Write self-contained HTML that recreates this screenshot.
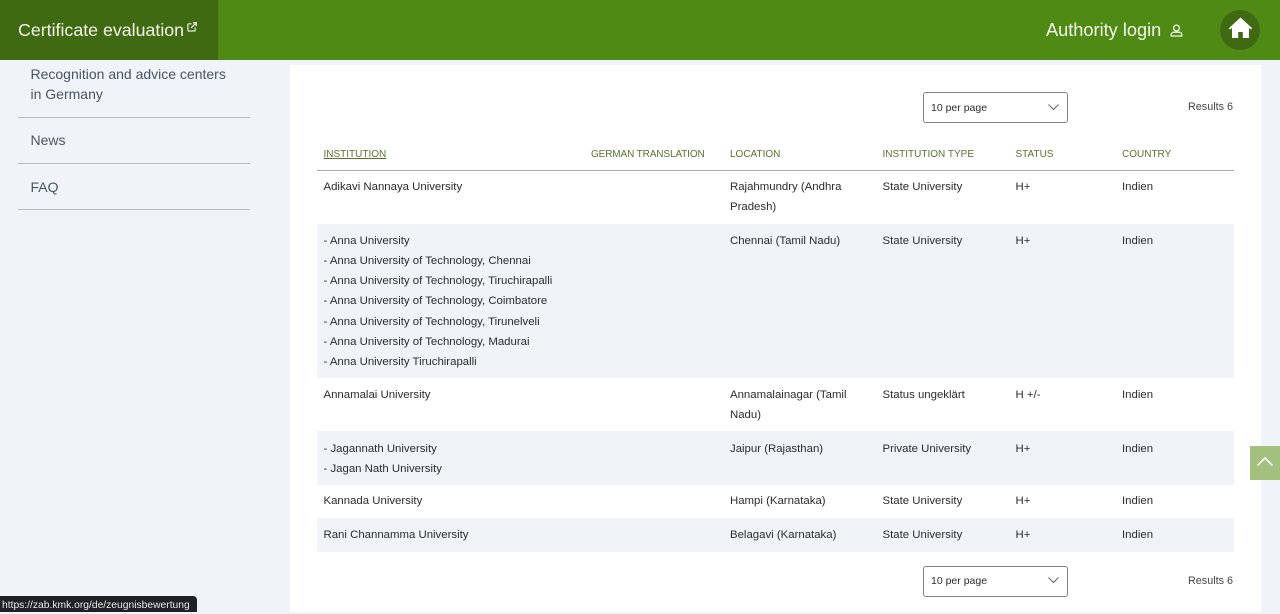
<!DOCTYPE html>
<html lang="en">
<head>
<meta charset="utf-8">
<title>Certificate evaluation</title>
<style>
html,body{margin:0;padding:0;width:1280px;height:612px;overflow:hidden;background:#f0f4f8;font-family:"Liberation Sans",sans-serif;}
div,span,a{position:absolute;white-space:nowrap;}
.t{font-size:11.4px;line-height:20px;color:#2b2b2b;margin-top:1px;}
.h{font-size:10px;line-height:14px;color:#55742a;top:148px;}
.n{font-size:14px;line-height:20px;color:#4a5560;left:30.5px;}
.r{background:#f0f4f8;left:317px;width:917px;}
.l{background:#b9bdc1;height:1px;left:18px;width:232px;}
.sel{left:923px;width:143px;height:29px;border:1px solid #7c8288;border-radius:3px;background:#fff;}
.res{font-size:10.8px;line-height:16px;color:#444;}
</style>
</head>
<body>
<div style="left:290px;top:65px;width:971px;height:547px;background:#fff"></div>

<div class="n" style="top:64px">Recognition and advice centers</div>
<div class="n" style="top:84px">in Germany</div>
<div class="l" style="top:117px"></div>
<div class="n" style="top:130px">News</div>
<div class="l" style="top:163px"></div>
<div class="n" style="top:177px">FAQ</div>
<div class="l" style="top:209px"></div>

<div style="left:0;top:0;width:1280px;height:60px;background:#4f8a15"></div>
<div style="left:0;top:0;width:218px;height:60px;background:#3f6a12"></div>
<div style="left:18px;top:19px;font-size:17.8px;line-height:22px;color:#f1f6ea">Certificate evaluation</div>
<svg style="position:absolute;left:187px;top:22px" width="10" height="10" viewBox="0 0 11 11" fill="none" stroke="#f1f6ea" stroke-width="1.3"><path d="M5 2H2a1 1 0 0 0-1 1v6a1 1 0 0 0 1 1h6a1 1 0 0 0 1-1V6"/><path d="M4.500 6.500 10 1M6.500 .8H10.200V4.500"/></svg>
<div style="left:1046px;top:19px;font-size:18.2px;line-height:22px;color:#f1f6ea">Authority login</div>
<svg style="position:absolute;left:1170px;top:24px" width="13" height="13" viewBox="0 0 13 13" fill="none" stroke="#f1f6ea" stroke-width="1.300"><circle cx="6.500" cy="4" r="2.900"/><path d="M1.200 12v-1.200c0-1.600 1.200-2.600 2.800-2.600h5c1.600 0 2.800 1 2.800 2.600V12z"/></svg>
<div style="left:1220px;top:10px;width:40px;height:40px;border-radius:50%;background:#3f6a12"></div>
<svg style="position:absolute;left:1228px;top:17px" width="25" height="22" viewBox="0 0 25 22"><path fill="#fff" d="M12.500 .5 0.800 11.200l1.300 1.300 1.900-1.600V21h6.200v-6h4.600v6H21V10.900l1.900 1.600 1.300-1.300z"/></svg>

<div class="sel" style="top:92px"></div>
<div style="left:931px;top:100px;font-size:10.5px;line-height:16px;color:#2b2b2b">10 per page</div>
<svg style="position:absolute;left:1047px;top:103px" width="13" height="8" viewBox="0 0 13 8" fill="none" stroke="#666" stroke-width="1"><path d="M1.500 1.500l5 5 5-5"/></svg>
<div class="res" style="left:1188px;top:99px">Results 6</div>

<div class="h" style="left:323.500px;text-decoration:underline">INSTITUTION</div>
<div class="h" style="left:591px;letter-spacing:-.12px">GERMAN TRANSLATION</div>
<div class="h" style="left:730px">LOCATION</div>
<div class="h" style="left:882.500px">INSTITUTION TYPE</div>
<div class="h" style="left:1015.500px">STATUS</div>
<div class="h" style="left:1122px">COUNTRY</div>
<div style="left:317px;top:170px;width:917px;height:1px;background:#a9abad"></div>

<div class="r" style="top:224px;height:154px"></div>
<div class="r" style="top:431px;height:54px"></div>
<div class="r" style="top:518px;height:34px"></div>

<div class="t" style="left:323.500px;top:176px">Adikavi Nannaya University</div>
<div class="t" style="left:730px;top:176px">Rajahmundry (Andhra</div>
<div class="t" style="left:730px;top:196px">Pradesh)</div>
<div class="t" style="left:882.500px;top:176px">State University</div>
<div class="t" style="left:1015.500px;top:176px">H+</div>
<div class="t" style="left:1122px;top:176px">Indien</div>

<div class="t" style="left:323.500px;top:230px">- Anna University</div>
<div class="t" style="left:323.500px;top:250px">- Anna University of Technology, Chennai</div>
<div class="t" style="left:323.500px;top:270px">- Anna University of Technology, Tiruchirapalli</div>
<div class="t" style="left:323.500px;top:290px">- Anna University of Technology, Coimbatore</div>
<div class="t" style="left:323.500px;top:311px">- Anna University of Technology, Tirunelveli</div>
<div class="t" style="left:323.500px;top:331px">- Anna University of Technology, Madurai</div>
<div class="t" style="left:323.500px;top:351px">- Anna University Tiruchirapalli</div>
<div class="t" style="left:730px;top:230px">Chennai (Tamil Nadu)</div>
<div class="t" style="left:882.500px;top:230px">State University</div>
<div class="t" style="left:1015.500px;top:230px">H+</div>
<div class="t" style="left:1122px;top:230px">Indien</div>

<div class="t" style="left:323.500px;top:384px">Annamalai University</div>
<div class="t" style="left:730px;top:384px">Annamalainagar (Tamil</div>
<div class="t" style="left:730px;top:404px">Nadu)</div>
<div class="t" style="left:882.500px;top:384px">Status ungeklärt</div>
<div class="t" style="left:1015.500px;top:384px">H +/-</div>
<div class="t" style="left:1122px;top:384px">Indien</div>

<div class="t" style="left:323.500px;top:438px">- Jagannath University</div>
<div class="t" style="left:323.500px;top:458px">- Jagan Nath University</div>
<div class="t" style="left:730px;top:438px">Jaipur (Rajasthan)</div>
<div class="t" style="left:882.500px;top:438px">Private University</div>
<div class="t" style="left:1015.500px;top:438px">H+</div>
<div class="t" style="left:1122px;top:438px">Indien</div>

<div class="t" style="left:323.500px;top:490px">Kannada University</div>
<div class="t" style="left:730px;top:490px">Hampi (Karnataka)</div>
<div class="t" style="left:882.500px;top:490px">State University</div>
<div class="t" style="left:1015.500px;top:490px">H+</div>
<div class="t" style="left:1122px;top:490px">Indien</div>

<div class="t" style="left:323.500px;top:524px">Rani Channamma University</div>
<div class="t" style="left:730px;top:524px">Belagavi (Karnataka)</div>
<div class="t" style="left:882.500px;top:524px">State University</div>
<div class="t" style="left:1015.500px;top:524px">H+</div>
<div class="t" style="left:1122px;top:524px">Indien</div>

<div class="sel" style="top:566px"></div>
<div style="left:931px;top:573px;font-size:10.5px;line-height:16px;color:#2b2b2b">10 per page</div>
<svg style="position:absolute;left:1047px;top:576px" width="13" height="8" viewBox="0 0 13 8" fill="none" stroke="#666" stroke-width="1"><path d="M1.500 1.500l5 5 5-5"/></svg>
<div class="res" style="left:1188px;top:573px">Results 6</div>

<div style="left:1250px;top:446px;width:30px;height:34px;background:#a3c07f"></div>
<svg style="position:absolute;left:1256px;top:456px" width="18" height="11" viewBox="0 0 18 11" fill="none" stroke="#eef4e6" stroke-width="1.900"><path d="M1.500 9.500 9 2l7.500 7.500"/></svg>

<div style="left:0;top:596px;width:197px;height:16px;background:#202124;border-top-right-radius:4px"></div>
<div style="left:2px;top:598px;font-size:10.3px;line-height:16px;color:#e8eaed">https://zab.kmk.org/de/zeugnisbewertung</div>
</body>
</html>
